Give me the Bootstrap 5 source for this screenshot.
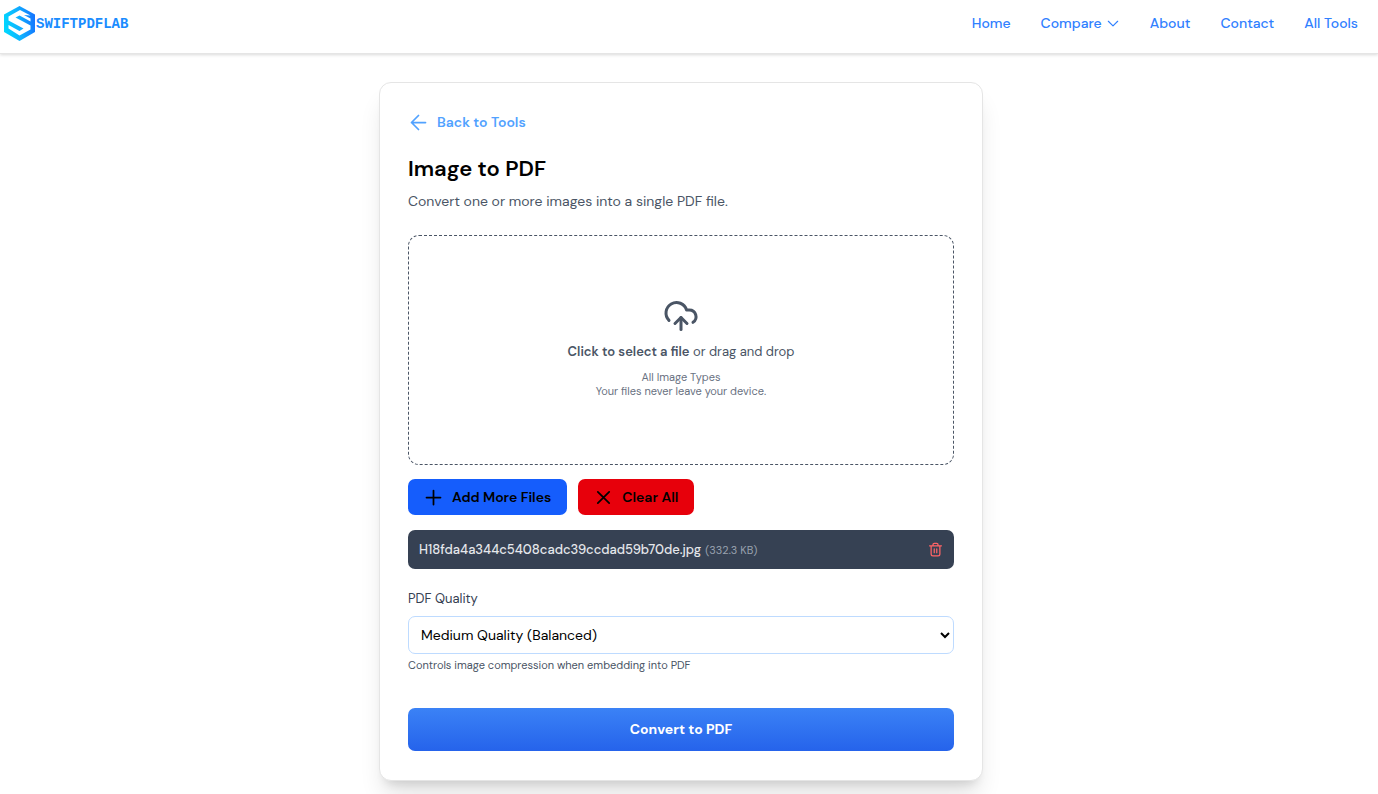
<!DOCTYPE html>
<html lang="en">
<head>
<meta charset="utf-8">
<meta name="viewport" content="width=device-width, initial-scale=1">
<title>Image to PDF - SwiftPDFLab</title>
<link href="https://cdn.jsdelivr.net/npm/bootstrap@5.3.0/dist/css/bootstrap.min.css" rel="stylesheet">
<style>
body{font-family:"DM Sans",Inter,sans-serif;font-size:14px;line-height:22px;color:#4a5565;background:#fff}
.site-header{border-bottom:1px solid #e5e5e5;box-shadow:0 1px 3px rgba(0,0,0,.15);min-height:54px;padding:0 20px 6px 4px}
.brand-word{font:700 14px/20px "Liberation Mono",monospace;color:#1a8cff}
.site-nav{gap:30px;padding-bottom:2px}
.site-nav a{color:#3080ff;font-weight:500;padding:0}
.page-main{padding:28px 16px 28px 0}
.tool-card{max-width:604px;border:1px solid #e5e5e5;border-radius:12px;padding:28px 28px 29px;box-shadow:0 18px 24px -5px rgba(0,0,0,.12),0 8px 10px -6px rgba(0,0,0,.12)}
.back-link{color:#51a2ff;font-weight:600;gap:8px;margin-bottom:22px}
h1{font-size:22px;line-height:28px;font-weight:600;color:#000;margin-bottom:7px}
.lede{margin-bottom:23px}
.drop-zone{border:1px dashed #4a5565;border-radius:11px;height:230px;margin-bottom:14px;padding-bottom:4px;cursor:pointer}
.drop-zone strong{font-weight:600}
.drop-text{font-size:13px;line-height:18px;margin:9px 0}
.fine-text{font-size:11px;line-height:14px;color:#6a7282}
.button-row{gap:11px}
.act{height:36px;border:0;border-radius:7px;color:#000;font-weight:600;line-height:22px;gap:8px;padding:0 16px 0 15px}
.act-add{background:#155dfc}
.act-clear{background:#e7000b}
.file-row{background:#364153;border-radius:7px;height:39px;padding:0 11px;margin:15px 0 21px}
.file-name{color:#e5e7eb;font-weight:500;font-size:13px}
.file-size{color:#99a1af;font-size:11px}
.trash{line-height:0}
.quality-label{font-size:13px;line-height:18px;color:#364153;margin-bottom:8px}
.quality{height:38px;border:1px solid #bedbff;border-radius:7px;padding:0 8px;background:#fff;color:#000}
.hint{font-size:11px;line-height:14px;margin:4px 0 36px}
.convert{height:43px;border:0;border-radius:7px;padding-bottom:3px;background:linear-gradient(#3b82f6,#2563eb);color:#fff;font-weight:700}
</style>
</head>
<body>
<header class="site-header d-flex align-items-center justify-content-between">
  <a href="#" class="d-flex align-items-center text-decoration-none">
    <svg width="32" height="35" viewBox="0 0 32 35" aria-hidden="true">
      <defs><linearGradient id="lg" x1="0" y1="0.600" x2="1" y2="0.400"><stop offset="0" stop-color="#00d8ff"/><stop offset=".5" stop-color="#10b0ff"/><stop offset="1" stop-color="#1474ff"/></linearGradient></defs>
      <path d="M15.500 0 31 8.500V26L15.500 35 0 26V8.500Z" fill="url(#lg)"/>
      <path d="M26.500 9.500 16 4 4.500 10.500V14.500L19.500 22.500 15.500 25 4.500 19V22.500L15.500 29.500 26.500 23.500V19.500L11.500 11.500 15.500 9.500 26.500 15.500V12.500L20 9Z" fill="#fff"/>
    </svg>
    <span class="brand-word">SWIFTPDFLAB</span>
  </a>
  <nav class="site-nav d-flex align-items-center">
    <a class="nav-link" href="#">Home</a>
    <a class="nav-link d-flex align-items-center" href="#">Compare
      <svg class="ms-1" width="14" height="14" viewBox="0 0 24 24" fill="none" stroke="currentColor" stroke-width="2" stroke-linecap="round" stroke-linejoin="round" aria-hidden="true"><path d="m4 9 8 8 8-8"/></svg></a>
    <a class="nav-link" href="#">About</a>
    <a class="nav-link" href="#">Contact</a>
    <a class="nav-link" href="#">All Tools</a>
  </nav>
</header>
<main class="page-main">
  <section class="tool-card mx-auto bg-white">
    <a href="#" class="back-link d-flex align-items-center text-decoration-none">
      <svg width="21" height="21" viewBox="0 0 24 24" fill="none" stroke="currentColor" stroke-width="2" stroke-linecap="round" stroke-linejoin="round" aria-hidden="true"><path d="M20 12H4M12 4l-8 8 8 8"/></svg>
      Back to Tools</a>
    <h1>Image to PDF</h1>
    <p class="lede">Convert one or more images into a single PDF file.</p>
    <label class="drop-zone d-flex flex-column align-items-center justify-content-center text-center">
      <svg width="36" height="36" viewBox="0 0 24 24" fill="none" stroke="#4a5565" stroke-width="2" stroke-linecap="round" stroke-linejoin="round" aria-hidden="true"><path d="M12 13v8"/><path d="M4 14.899A7 7 0 1 1 15.710 8h1.790a4.500 4.500 0 0 1 2.500 8.242"/><path d="m8 17 4-4 4 4"/></svg>
      <span class="drop-text"><strong>Click to select a file</strong> or drag and drop</span>
      <span class="fine-text">All Image Types<br>Your files never leave your device.</span>
      <input type="file" class="d-none" accept="image/*" multiple>
    </label>
    <div class="d-flex button-row">
      <button type="button" class="act act-add d-flex align-items-center">
        <svg width="21" height="21" viewBox="0 0 24 24" fill="none" stroke="currentColor" stroke-width="2" stroke-linecap="round" aria-hidden="true"><path d="M12 4v16M4 12h16"/></svg>
        Add More Files</button>
      <button type="button" class="act act-clear d-flex align-items-center">
        <svg width="21" height="21" viewBox="0 0 24 24" fill="none" stroke="currentColor" stroke-width="2" stroke-linecap="round" aria-hidden="true"><path d="m5.500 5.500 13 13M18.500 5.500l-13 13"/></svg>
        Clear All</button>
    </div>
    <div class="file-row d-flex align-items-center">
      <span class="file-name">H18fda4a344c5408cadc39ccdad59b70de.jpg</span>
      <span class="file-size ms-1">(332.3 KB)</span>
      <button type="button" class="trash btn p-0 border-0 ms-auto" aria-label="Remove file">
        <svg width="15" height="15" viewBox="0 0 24 24" fill="none" stroke="#ff6467" stroke-width="2" stroke-linecap="round" stroke-linejoin="round" aria-hidden="true"><path d="M2.500 6h19M5 6v13a3 3 0 0 0 3 3h8a3 3 0 0 0 3-3V6M8 6V4a2 2 0 0 1 2-2h4a2 2 0 0 1 2 2v2M10 11v6M14 11v6"/></svg></button>
    </div>
    <label class="quality-label d-block" for="quality">PDF Quality</label>
    <select class="quality w-100 d-block" id="quality"><option>High Quality</option><option selected>Medium Quality (Balanced)</option><option>Low Quality</option></select>
    <p class="hint">Controls image compression when embedding into PDF</p>
    <button type="button" class="convert w-100 d-block">Convert to PDF</button>
  </section>
</main>
<script src="https://cdn.jsdelivr.net/npm/bootstrap@5.3.0/dist/js/bootstrap.bundle.min.js"></script>
</body>
</html>
